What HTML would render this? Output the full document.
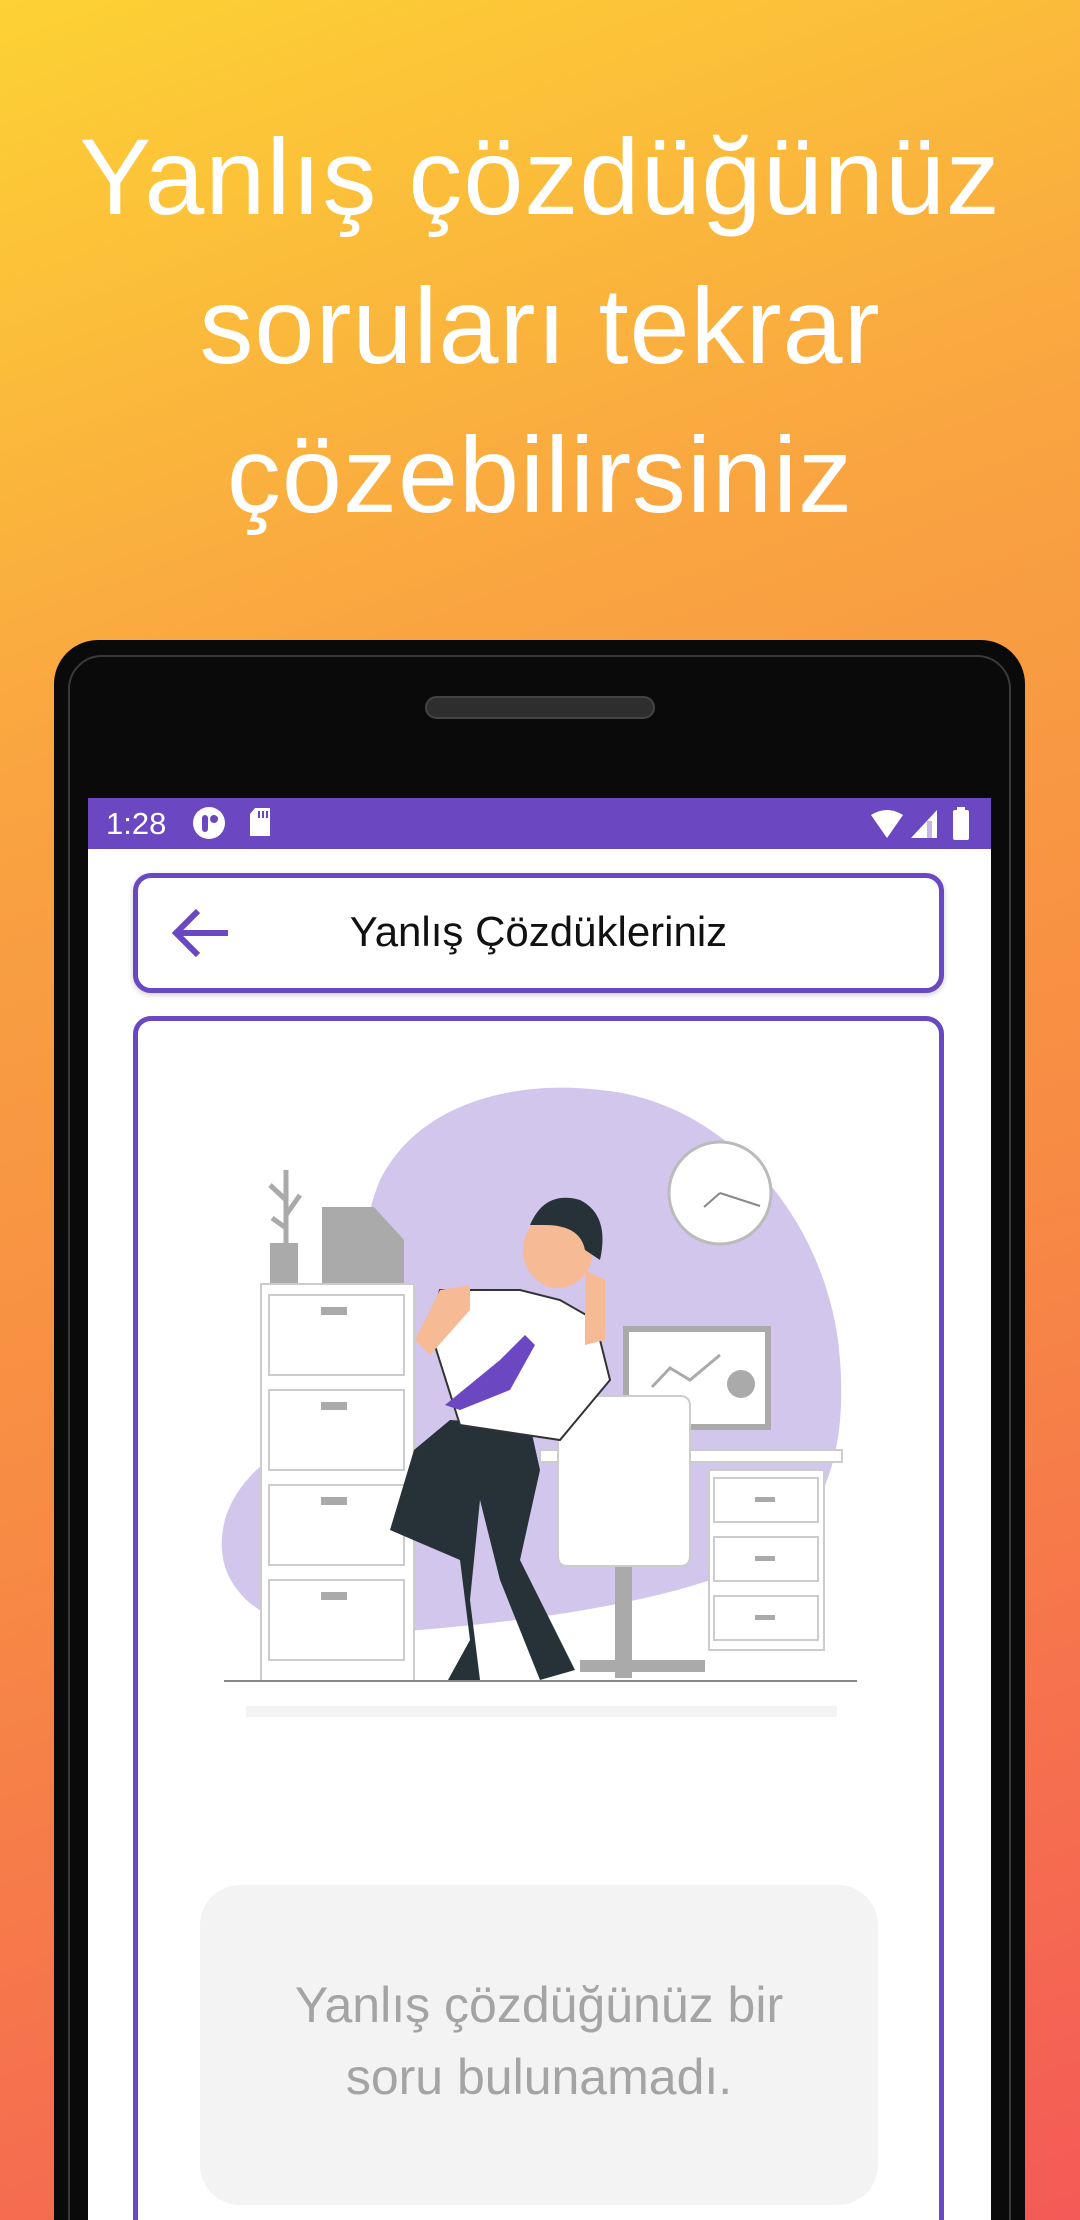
<!DOCTYPE html>
<html style="overflow:hidden;height:2220px"><head><meta charset="utf-8"><style>
html,body{margin:0;padding:0}
body{width:1080px;height:2220px;overflow:hidden;position:relative;font-family:"Liberation Sans",sans-serif}
.bg{position:absolute;left:0;top:0;width:1080px;height:2220px;background:linear-gradient(160deg,#fdd234 0%,#f9a441 30%,#f78a44 60%,#f45a57 100%)}
.title{position:absolute;top:102px;left:0;width:1080px;text-align:center;color:#fff;font-size:108px;line-height:149px;letter-spacing:1px}
.phone{position:absolute;left:54px;top:640px;width:971px;height:1580px;background:#0a0a0a;border-radius:44px 44px 0 0;overflow:hidden}
.bezel{position:absolute;left:14px;top:15px;right:14px;bottom:-40px;border:2px solid #3a3a3a;border-radius:34px}
.speaker{position:absolute;left:371px;top:56px;width:230px;height:23px;background:#2e2e2e;border:2px solid #444;border-radius:12px;box-sizing:border-box}
.screen{position:absolute;left:88px;top:798px;width:903px;height:1422px;background:#fff;overflow:hidden}
.sb{position:absolute;left:0;top:0;width:903px;height:51px;background:#6b48c2;color:#fff}
.card{position:absolute;left:45px;width:811px;box-sizing:border-box;border:5px solid #6a48c2;border-radius:18px;background:#fff;box-shadow:0 2px 6px rgba(0,0,0,.2)}
.gbox{position:absolute;left:112px;top:1087px;width:678px;height:320px;background:#f3f3f3;border-radius:40px;text-align:center;color:#a4a4a4;font-size:50px;line-height:72px;box-sizing:border-box;padding-top:84px}
</style></head><body>
<div class="bg"></div>
<div class="title">Yanlış çözdüğünüz<br>soruları tekrar<br>çözebilirsiniz</div>
<div class="phone"><div class="bezel"></div><div class="speaker"></div></div>
<div class="screen">
 <div class="sb">
  <div style="position:absolute;left:18px;top:8px;font-size:31px">1:28</div>
  <svg style="position:absolute;left:104px;top:8px" width="34" height="34" viewBox="0 0 34 34"><circle cx="17" cy="17" r="16" fill="#fff"/><rect x="10" y="9" width="6" height="17" rx="3" fill="#6b48c2"/><circle cx="22" cy="13" r="4" fill="#6b48c2"/></svg>
  <svg style="position:absolute;left:160px;top:9px" width="24" height="30" viewBox="0 0 24 30"><path d="M7 1H22V29H2V7Z" fill="#fff"/><rect x="10" y="4" width="2" height="7" fill="#6b48c2"/><rect x="14" y="4" width="2" height="7" fill="#6b48c2"/><rect x="18" y="4" width="2" height="7" fill="#6b48c2"/></svg>
  <svg style="position:absolute;left:782px;top:11px" width="34" height="30" viewBox="0 0 34 30"><path d="M1 6Q17-4 33 6L17 29Z" fill="#fff"/></svg>
  <svg style="position:absolute;left:822px;top:11px" width="28" height="30" viewBox="0 0 28 30"><path d="M27 1V29H1Z" fill="#fff"/><rect x="17" y="12" width="5" height="17" fill="#6b48c2" opacity=".4"/></svg>
  <svg style="position:absolute;left:864px;top:9px" width="18" height="34" viewBox="0 0 18 34"><rect x="5" y="0" width="8" height="4" fill="#fff"/><rect x="1" y="3" width="16" height="30" rx="2" fill="#fff"/></svg>
 </div>
 <div class="card" style="top:75px;height:120px">
  <svg style="position:absolute;left:32px;top:30px" width="60" height="50" viewBox="0 0 60 50"><path d="M28 3L6 25L28 47M6 25H58" stroke="#6b48c2" stroke-width="6" fill="none"/></svg>
  <div style="position:absolute;left:0;right:0;top:30px;text-align:center;font-size:42px;color:#111">Yanlış Çözdükleriniz</div>
 </div>
 <div class="card" style="top:218px;height:1300px;box-shadow:none">
  <svg style="position:absolute;left:-138px;top:-1021px" width="1080" height="2220" viewBox="0 0 1080 2220">
   <path d="M380 1180C420 1100 520 1080 600 1090C720 1100 820 1210 838 1340C850 1440 830 1520 760 1560C680 1600 540 1620 420 1630C330 1640 250 1630 226 1570C210 1520 240 1470 300 1440C350 1410 350 1250 380 1180Z" fill="#d2c6ec"/>
   <circle cx="720" cy="1193" r="51" fill="#fff" stroke="#bbb" stroke-width="3"/>
   <path d="M720 1193L704 1207M720 1193L760 1206" stroke="#888" stroke-width="2"/>
   <g fill="#aaa"><rect x="270" y="1243" width="28" height="40"/><path d="M322 1207H374L404 1240V1283H322Z"/></g>
   <path d="M286 1243V1170M286 1200L270 1185M286 1215L300 1195M286 1228L272 1218" stroke="#aaa" stroke-width="5"/>
   <g fill="#fff" stroke="#ccc" stroke-width="2">
    <rect x="261" y="1284" width="153" height="397"/>
    <rect x="269" y="1295" width="135" height="80"/><rect x="269" y="1390" width="135" height="80"/><rect x="269" y="1485" width="135" height="80"/><rect x="269" y="1580" width="135" height="80"/>
    <rect x="540" y="1450" width="302" height="12"/>
    <rect x="709" y="1470" width="115" height="180"/>
    <rect x="714" y="1478" width="104" height="44"/><rect x="714" y="1537" width="104" height="44"/><rect x="714" y="1596" width="104" height="44"/>
    <rect x="626" y="1329" width="142" height="98" stroke="#aaa" stroke-width="6"/>
   </g>
   <g fill="#aaa"><rect x="321" y="1307" width="26" height="8"/><rect x="321" y="1402" width="26" height="8"/><rect x="321" y="1497" width="26" height="8"/><rect x="321" y="1592" width="26" height="8"/>
    <rect x="755" y="1497" width="20" height="5"/><rect x="755" y="1556" width="20" height="5"/><rect x="755" y="1615" width="20" height="5"/><circle cx="741" cy="1384" r="14"/>
    <rect x="615" y="1566" width="17" height="112"/><path d="M580 1660H705V1672H580Z"/></g>
   <path d="M652 1387L670 1368L690 1380L720 1355" stroke="#aaa" stroke-width="3" fill="none"/>
   <path d="M568 1396H680Q690 1396 690 1406V1556Q690 1566 680 1566H568Q558 1566 558 1556V1406Q558 1396 568 1396Z" fill="#fff" stroke="#ccc" stroke-width="2"/>
   <path d="M448 1680L470 1640L460 1560L390 1530L414 1450L450 1420L530 1425L540 1470L520 1560L560 1640L575 1670L540 1680L500 1580L480 1500L470 1600L480 1680Z" fill="#263238"/>
   <path d="M440 1290L520 1290L560 1300L595 1320L610 1380L560 1440L460 1425L430 1330Z" fill="#fff" stroke="#333" stroke-width="2"/>
   <path d="M445 1405L500 1360L525 1335L535 1345L510 1390L460 1410Z" fill="#6b48c2"/>
   <path d="M440 1290L415 1340L430 1355L470 1310L470 1285Z" fill="#f6bb95"/>
   <path d="M585 1270L605 1280L605 1340L585 1345Z" fill="#f6bb95"/>
   <ellipse cx="558" cy="1250" rx="35" ry="38" fill="#f6bb95"/>
   <path d="M530 1225Q545 1190 580 1200Q610 1215 600 1260L585 1250Q580 1225 545 1225Z" fill="#263238"/>
   <rect x="224" y="1680" width="633" height="2" fill="#888"/>
   <rect x="246" y="1706" width="591" height="11" fill="#f3f3f3"/>
  </svg>
 </div>
 <div class="gbox">Yanlış çözdüğünüz bir<br>soru bulunamadı.</div>
</div>
</body></html>
